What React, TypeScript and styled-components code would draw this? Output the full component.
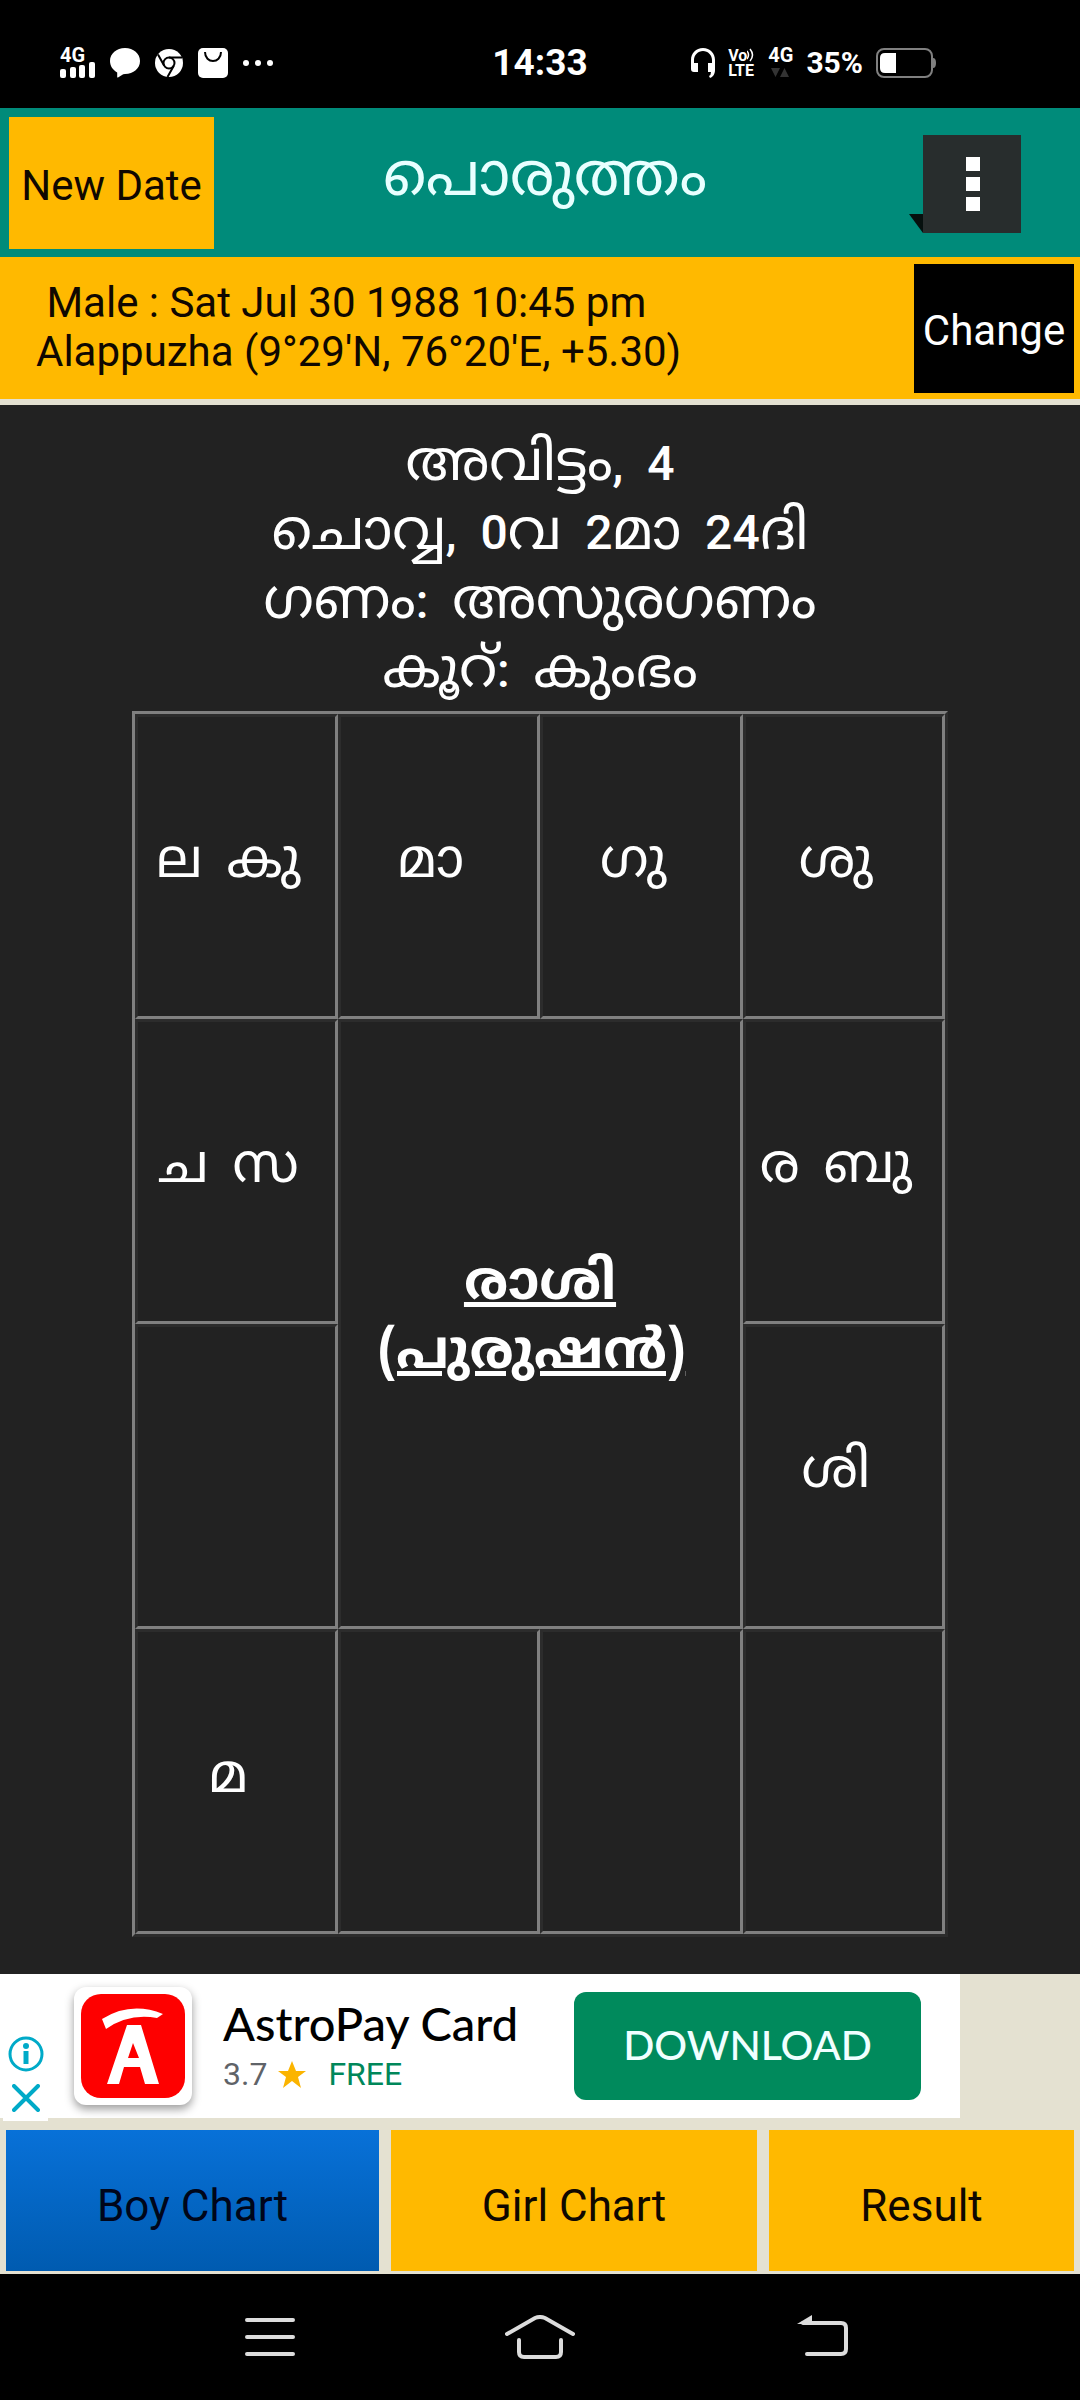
import React from 'react';
import styled, { createGlobalStyle } from 'styled-components';

const latin = "Roboto, 'Noto Sans', sans-serif";
const malayalam = "'Noto Sans Malayalam', 'Noto Sans', Roboto, sans-serif";
const amber = '#ffb900';
const beige = '#e4e1d1';

const GlobalStyle = createGlobalStyle`
  body { margin: 0; background: #000; font-family: ${latin}; }
  * { box-sizing: border-box; }
  button { border: 0; border-radius: 0; padding: 0; margin: 0; font-family: inherit; cursor: pointer; }
`;

const Screen = styled.div`
  min-height: 100vh;
  display: flex;
  flex-direction: column;
`;

const StatusBar = styled.header`
  height: 108px;
  padding: 17px 60px 0;
  display: grid;
  grid-template-columns: 1fr auto 1fr;
  align-items: center;
  color: #fff;
  font-weight: 700;
`;
const StatusGroup = styled.div<{ $end?: boolean }>`
  display: flex;
  align-items: center;
  gap: ${p => (p.$end ? 13 : 15)}px;
  padding-right: ${p => (p.$end ? 84 : 0)}px;
  justify-content: ${p => (p.$end ? 'flex-end' : 'flex-start')};
`;
const Clock = styled.time`font-size: 37px; line-height: 40px;`;
const Percent = styled.span`font-size: 30px; line-height: 30px;`;
const IconStack = styled.span`
  display: flex;
  flex-direction: column;
  align-items: flex-start;
  height: 30px;
`;
const NetworkLabel = styled.span`font-size: 20px; line-height: 14px;`;
const LteLabel = styled.span`
  display: flex;
  align-items: center;
  font-size: 16px;
  line-height: 15px;
`;

const TitleBar = styled.div`
  padding: 9px;
  height: 149px;
  display: grid;
  grid-template-columns: 205px 1fr 195px;
  background: #008b7a;
`;
const NewDate = styled.button`
  background: ${amber};
  font-size: 42px;
  color: #100800;
  height: 132px;
  padding-top: 4px;
`;
const Title = styled.h1`
  margin: 0;
  text-align: center;
  font: 400 60px/128px ${malayalam};
  color: #e8ffff;
`;
const MenuButton = styled.button`
  background: none;
  justify-self: end;
  align-self: center;
  margin-right: 50px;
  padding-top: 2px;
  line-height: 0;
`;

const PersonBar = styled.section`
  height: 142px;
  padding: 7px 6px 6px 36px;
  background: ${amber};
  display: flex;
  justify-content: space-between;
`;
const PersonText = styled.p`
  margin: 0;
  padding-top: 14px;
  font-size: 42px;
  line-height: 49px;
  white-space: pre;
  color: #100800;
`;
const ChangeButton = styled.button`
  width: 160px;
  padding-top: 3px;
  background: #000;
  color: #fff;
  font-size: 42px;
`;

const Chart = styled.main`
  flex: 1;
  border-top: 6px solid ${beige};
  background: #222;
  padding: 27px 132px 37px;
  color: #fff;
  font-family: ${malayalam};
  font-size: 54px;
  line-height: 69px;
`;
const Summary = styled.div`
  height: 279px;
  text-align: center;
  white-space: pre;
  font-size: 56px;
`;
const Line = styled.p`margin: 0; height: 69px;`;
const Figure = styled.span`
  font-family: Roboto, sans-serif;
  font-size: 48px;
  font-weight: 500;
  line-height: 1;
`;

const Grid = styled.table`
  width: 100%;
  table-layout: fixed;
  border-spacing: 0;
  border: 3px solid;
  border-color: #808080 #2c2c2c #2c2c2c #808080;
`;
const House = styled.td`
  height: 305px;
  padding: 0 0 4px;
  border: 3px solid;
  border-color: #2c2c2c #808080 #808080 #2c2c2c;
  text-align: center;
  vertical-align: middle;
  white-space: pre;
`;
const Planet = styled.span`
  margin-right: 16px;
  & + & { margin-left: 8px; }
`;
const ChartName = styled(House)`
  padding-bottom: 6px;
  font-size: 54px;
  font-weight: 700;
`;

const AdStrip = styled.aside`
  background: ${beige};
  padding-right: 120px;
  height: 156px;
`;
const Ad = styled.div`
  height: 144px;
  background: #fff;
  display: flex;
  align-items: center;
  padding-right: 39px;
`;
const AdControls = styled.div`
  align-self: flex-end;
  width: 45px;
  margin: 0 26px -3px 3px;
  padding: 0 4px 9px 5px;
  background: #fff;
  display: flex;
  flex-direction: column;
  align-items: center;
  gap: 12px;
`;
const AdIconButton = styled.button`background: none; line-height: 0;`;
const AppIcon = styled.div`
  width: 118px;
  height: 118px;
  padding: 7px;
  border-radius: 12px;
  background: #fff;
  box-shadow: 0 4px 10px rgba(0, 0, 0, 0.4);
  line-height: 0;
`;
const AdText = styled.div`
  flex: 1;
  padding-left: 31px;
`;
const AdTitle = styled.div`
  font: 500 47px/56px Lato, sans-serif;
  color: #000;
`;
const AdMeta = styled.div`
  display: flex;
  align-items: center;
  gap: 11px;
  font-size: 32px;
  line-height: 46px;
  color: #5f6368;
`;
const Free = styled.span`color: #00875a; margin-left: 11px;`;
const Download = styled.button`
  width: 347px;
  height: 108px;
  padding-bottom: 4px;
  border-radius: 12px;
  background: #008a5c;
  color: #f0ffff;
  font: 500 41px Lato, sans-serif;
`;

const Tabs = styled.nav`
  background: ${beige};
  padding: 0 6px 3px;
  display: grid;
  grid-template-columns: 373fr 366fr 305fr;
  gap: 12px;
`;
const Tab = styled.button<{ $active?: boolean }>`
  height: 141px;
  padding-top: 11px;
  font-size: 44px;
  color: ${p => (p.$active ? '#00061a' : '#100800')};
  background: ${p => (p.$active ? 'linear-gradient(#0871d8, #005bb0)' : amber)};
`;

const SystemNav = styled.footer`
  height: 126px;
  display: grid;
  grid-template-columns: 1fr 70px 1fr;
  column-gap: 210px;
  align-items: center;
`;
const NavButton = styled.button<{ $side?: 'start' | 'end' }>`
  background: none;
  line-height: 0;
  justify-self: ${p => p.$side ?? 'center'};
`;

const houses = [['ല', 'കു'], ['മാ'], ['ഗു'], ['ശു'], ['ച', 'സ'], ['ര', 'ബു'], [], ['ശി'], ['മ'], [], [], []];

function HouseCell({ planets }: { planets: string[] }) {
  return <House>{planets.map(p => <Planet key={p}>{p}</Planet>)}</House>;
}

export default function App() {
  return (
    <Screen>
      <GlobalStyle />
      <StatusBar>
        <StatusGroup>
          <IconStack>
            <NetworkLabel>4G</NetworkLabel>
            <svg width="35" height="16" viewBox="0 0 35 16" fill="#fff">
              <rect x="0" y="7" width="6" height="9" rx="2" />
              <rect x="10" y="5" width="6" height="11" rx="2" />
              <rect x="19" y="3" width="6" height="13" rx="2" />
              <rect x="29" y="0" width="6" height="16" rx="2" />
            </svg>
          </IconStack>
          <svg width="30" height="30" viewBox="0 0 30 30" fill="#fff">
            <path d="M15 0c8.500 0 15 5.600 15 13s-6.500 13-15 13q-2 0-3 1l-4 2.500q-.8.300-.8-.6V24.500C2.800 22 0 18 0 13 0 5.600 6.500 0 15 0z" />
          </svg>
          <svg width="28" height="28" viewBox="0 0 28 28">
            <circle cx="14" cy="14" r="14" fill="#fff" />
            <g fill="none" stroke="#000" strokeWidth="2">
              <circle cx="14" cy="14" r="5.500" />
              <path d="M14 8.500h13M9.200 16.700L3 5.500M18.800 16.700L12.500 28" />
            </g>
          </svg>
          <svg width="30" height="30" viewBox="0 0 30 30">
            <rect width="30" height="30" rx="5" fill="#fff" />
            <path d="M7 4c0 12 16 12 16 0" fill="none" stroke="#000" strokeWidth="2" />
          </svg>
          <svg width="30" height="30" viewBox="0 0 30 30" fill="#fff">
            <circle cx="3" cy="15" r="3" /><circle cx="15" cy="15" r="3" /><circle cx="27" cy="15" r="3" />
          </svg>
        </StatusGroup>
        <Clock>14:33</Clock>
        <StatusGroup $end>
          <svg width="24" height="30" viewBox="0 0 24 30" fill="#fff">
            <path d="M0 12C0 5 5 0 12 0s12 5 12 12v10c0 4-2 7-5 8l-1-2q2-1 2-4h-3V15h4v-3c0-5-4-9-9-9s-9 4-9 9v3h4v9H3q-3 0-3-3z" />
          </svg>
          <IconStack>
            <LteLabel>
              Vo
              <svg width="8" height="14" viewBox="0 0 8 14" fill="none" stroke="#fff" strokeWidth="1.500">
                <path d="M0 3q3 4 0 8M3 1q5 6 0 12" />
              </svg>
            </LteLabel>
            <LteLabel>LTE</LteLabel>
          </IconStack>
          <IconStack>
            <NetworkLabel>4G</NetworkLabel>
            <svg width="24" height="16" viewBox="0 0 24 16" fill="#333">
              <path d="M3 6h9l-4.500 9zM12 15l4.500-9 4.500 9z" />
            </svg>
          </IconStack>
          <Percent>35%</Percent>
          <svg width="60" height="30" viewBox="0 0 60 30">
            <rect x="1" y="1" width="55" height="28" rx="7" fill="none" stroke="#808080" strokeWidth="2" />
            <path d="M57 10q3 0 3 5t-3 5z" fill="#808080" />
            <path d="M20 5v20H9q-5 0-5-5V10q0-5 5-5z" fill="#fff" />
          </svg>
        </StatusGroup>
      </StatusBar>
      <TitleBar>
        <NewDate>New Date</NewDate>
        <Title>പൊരുത്തം</Title>
        <MenuButton aria-label="Menu">
          <svg width="112" height="98" viewBox="0 0 112 98">
            <path d="M14 0h98v98H14z" fill="#282d2d" />
            <path d="M0 79h14v19z" fill="#06100e" />
            <path d="M57 22h14v14H57zM57 42h14v14H57zM57 62h14v14H57z" fill="#fff" />
          </svg>
        </MenuButton>
      </TitleBar>
      <PersonBar>
        <PersonText>{' Male : Sat Jul 30 1988 10:45 pm\nAlappuzha (9°29\'N, 76°20\'E, +5.30)'}</PersonText>
        <ChangeButton>Change</ChangeButton>
      </PersonBar>
      <Chart>
        <Summary>
          <Line>അവിട്ടം<Figure>{',  4'}</Figure></Line>
          <Line>ചൊവ്വ<Figure>{',  0'}</Figure>വ<Figure>{'  2'}</Figure>മാ<Figure>{'  24'}</Figure>ദി</Line>
          <Line>ഗണം<Figure>{':  '}</Figure>അസുരഗണം</Line>
          <Line>കൂറ്<Figure>{':  '}</Figure>കുംഭം</Line>
        </Summary>
        <Grid>
          <tbody>
            <tr>{houses.slice(0, 4).map((h, i) => <HouseCell key={i} planets={h} />)}</tr>
            <tr>
              <HouseCell planets={houses[4]} />
              <ChartName colSpan={2} rowSpan={2}><u>രാശി</u>{'\n'}<u>(പുരുഷൻ)</u>{' '}</ChartName>
              <HouseCell planets={houses[5]} />
            </tr>
            <tr>{houses.slice(6, 8).map((h, i) => <HouseCell key={i} planets={h} />)}</tr>
            <tr>{houses.slice(8).map((h, i) => <HouseCell key={i} planets={h} />)}</tr>
          </tbody>
        </Grid>
      </Chart>
      <AdStrip>
        <Ad>
          <AdControls>
            <AdIconButton aria-label="Ad info">
              <svg width="36" height="36" viewBox="0 0 36 36" fill="none" stroke="#00aac8">
                <circle cx="18" cy="18" r="16" strokeWidth="3" />
                <path d="M18 15v13" strokeWidth="5" />
                <circle cx="18" cy="10" r="3" fill="#00aac8" stroke="none" />
              </svg>
            </AdIconButton>
            <AdIconButton aria-label="Close ad">
              <svg width="28" height="28" viewBox="0 0 28 28" fill="none" stroke="#00aac8" strokeWidth="4" strokeLinecap="round">
                <path d="M2 2l24 24M26 2L2 26" />
              </svg>
            </AdIconButton>
          </AdControls>
          <AppIcon>
            <svg width="104" height="104" viewBox="0 0 104 104">
              <rect width="104" height="104" rx="20" fill="#fe0000" />
              <path d="M21 25Q50 7 82 20L76 24Q48 19 25 35z" fill="#fff" />
              <path fillRule="evenodd" d="M46 31h14l18 59H64l-5-17H43l-5 17H26zM52 49l-5 15h11z" fill="#fff" />
            </svg>
          </AppIcon>
          <AdText>
            <AdTitle>AstroPay Card</AdTitle>
            <AdMeta>
              3.7
              <svg width="28" height="27" viewBox="0 0 28 27"><path d="M14 0l4 10h10l-8 6 3 11-9-7-9 7 3-11-8-6h10z" fill="#fbb400" /></svg>
              <Free>FREE</Free>
            </AdMeta>
          </AdText>
          <Download>DOWNLOAD</Download>
        </Ad>
      </AdStrip>
      <Tabs>
        <Tab $active>Boy Chart</Tab>
        <Tab>Girl Chart</Tab>
        <Tab>Result</Tab>
      </Tabs>
      <SystemNav>
        <NavButton $side="end" aria-label="Recent apps">
          <svg width="50" height="44" viewBox="0 0 50 44" stroke="#dcdcdc" strokeWidth="4" strokeLinecap="round"><path d="M2 5h46M2 22h46M2 39h46" /></svg>
        </NavButton>
        <NavButton aria-label="Home">
          <svg width="70" height="44" viewBox="0 0 70 44" fill="none" stroke="#dcdcdc" strokeWidth="4" strokeLinecap="round"><path d="M2 19L30 3q5-2 10 0l28 16M14 25v12q0 5 5 5h32q5 0 5-5V25" /></svg>
        </NavButton>
        <NavButton $side="start" aria-label="Back">
          <svg width="64" height="44" viewBox="-12 0 64 44" fill="none" stroke="#dcdcdc" strokeWidth="4" strokeLinecap="round"><path d="M6 8h38q5 0 5 5v21q0 5-5 5H10" /><path d="M0 9L15 0v9z" fill="#dcdcdc" stroke="none" /></svg>
        </NavButton>
      </SystemNav>
    </Screen>
  );
}
